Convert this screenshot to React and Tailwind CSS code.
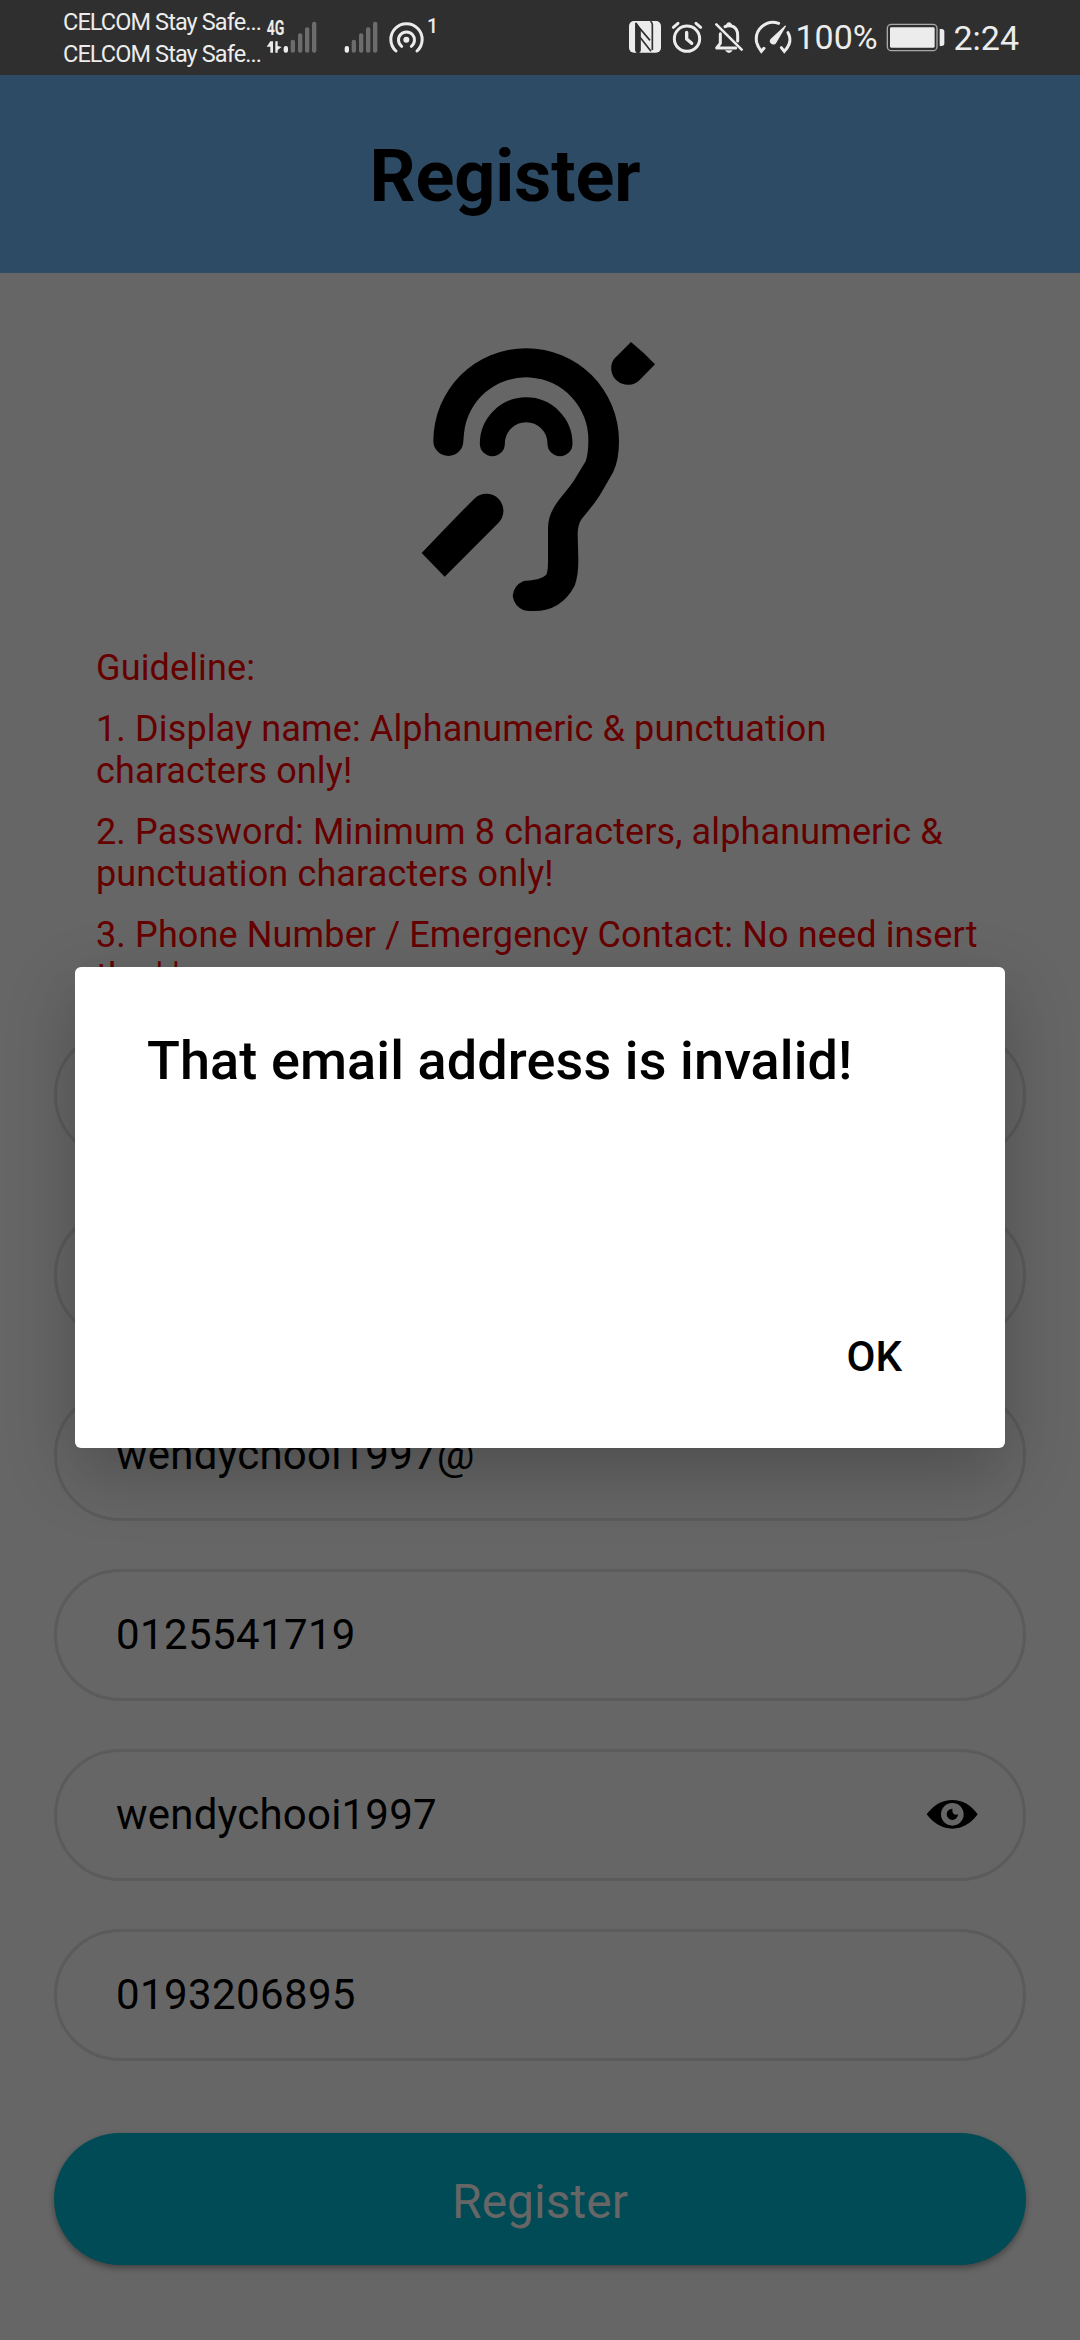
const guidelines = [
  "Guideline:",
  "1. Display name: Alphanumeric & punctuation characters only!",
  "2. Password: Minimum 8 characters, alphanumeric & punctuation characters only!",
  "3. Phone Number / Emergency Contact: No need insert the '-'",
];

function SignalIcons() {
  return (
    <svg className="h-[75px] w-[180px]" viewBox="678 0 540 225" fill="#ececec">
      <text x="680" y="106" fontFamily="Roboto" fontWeight="700" fontSize="58" textLength="53" lengthAdjust="spacingAndGlyphs">4G</text>
      <path d="M691 124h8v34h-8v-18h-11zM706 124h7v14l12 3-12 9v8h-7z" />
      <rect x="731" y="138" width="13" height="20" rx="6" />
      <g fill="#6c6c6c">
        <rect x="752" y="119" width="13" height="39" rx="6" />
        <rect x="774" y="100" width="13" height="58" rx="6" />
        <rect x="795" y="82" width="13" height="76" rx="6" />
        <rect x="816" y="65" width="13" height="93" rx="6" />
        <rect x="935" y="119" width="13" height="39" rx="6" />
        <rect x="957" y="100" width="13" height="58" rx="6" />
        <rect x="978" y="82" width="13" height="76" rx="6" />
        <rect x="999" y="65" width="13" height="93" rx="6" />
      </g>
      <rect x="914" y="138" width="13" height="20" rx="6" />
      <circle cx="1099" cy="119" r="9" />
      <g fill="none" stroke="#ececec" strokeWidth="9" strokeLinecap="round">
        <path d="M1068 153A47 47 0 1 1 1131 153" />
        <path d="M1085 139A24 24 0 1 1 1114 139" />
      </g>
      <text x="1161" y="99" fontFamily="Roboto" fontWeight="500" fontSize="59">1</text>
    </svg>
  );
}

function DeviceIcons() {
  return (
    <svg className="h-[75px] w-[164px]" viewBox="87 0 492 225" fill="#ececec">
      <rect x="87" y="63" width="96" height="95" rx="15" />
      <g fill="none" stroke="#2f2f2f" strokeWidth="5">
        <path d="M108 68V152Q110 156 114 158" />
        <path d="M108 70L120 86V152Q119 156 114 158" />
        <path d="M120 86L150 121" />
        <path d="M120 112L153 154" />
        <path d="M151 64Q157 67 157 74V150" />
      </g>
      <path d="M106 68L120 84V156H110L106 150z" fill="#2f2f2f" />
      <g fill="none" stroke="#ececec" strokeWidth="9" strokeLinecap="round" strokeLinejoin="round">
        <circle cx="261" cy="116" r="38" />
        <path d="M220 82L234 70M288 70L302 82" />
        <path d="M260 97V117L275 130" strokeWidth="10" />
        <path d="M349 73L425 149" strokeWidth="8" />
        <path d="M361 101V130L350 144H407" />
        <path d="M375 80Q387 74 400 80Q413 87 413 106V123" />
        <path d="M382 76Q387 67 392 76" />
      </g>
      <path d="M375 151H398Q394 159 387 159T375 151z" />
      <g fill="none" stroke="#ececec" strokeWidth="9" strokeLinecap="round">
        <path d="M536 70A50 50 0 0 0 470 127Q473 140 484 154L492 145" />
        <path d="M564 98Q574 115 567 133Q563 143 553 154L544 143" />
      </g>
      <path d="M556 76L558 79L529 128A10 10 0 1 1 511 118z" />
    </svg>
  );
}

function Battery() {
  return (
    <svg className="h-[75px] w-[59px]" viewBox="857 0 177 225">
      <rect x="861" y="73" width="149" height="79" rx="12" fill="none" stroke="#a8a8a8" strokeWidth="4" />
      <rect x="869" y="82" width="134" height="61" rx="4" fill="#ececec" />
      <path d="M1018 87h6q8 0 8 8v35q0 8-8 8h-6z" fill="#ececec" />
    </svg>
  );
}

function StatusBar() {
  return (
    <div className="flex h-[75px] items-center bg-[#2f2f2f] pl-[63px] pr-[61px] text-[#ececec]">
      <div className="w-[203px] shrink-0 whitespace-nowrap text-[23.5px] leading-8 tracking-[-0.9px]">
        <div>CELCOM Stay Safe...</div>
        <div>CELCOM Stay Safe...</div>
      </div>
      <SignalIcons />
      <div className="ml-auto flex items-center text-[34px] leading-[75px]">
        <DeviceIcons />
        <span className="ml-[2px] w-[91px]">100%</span>
        <Battery />
        <span className="ml-2 pt-px">2:24</span>
      </div>
    </div>
  );
}

function EarLogo() {
  return (
    <svg className="mx-auto block h-[280px] w-[240px]" viewBox="60 60 720 840">
      <path d="M100 363A278 278 0 0 1 657 363Q657 420 640 455L610 508Q598 530 583 550L545 597Q534 612 533 640L535 720Q535 768 524 797Q483 874 400 873Q379 873 370 870Q343 858 338 828Q341 796 371 783Q424 780 439 764Q444 752 444 725V622Q445 590 463 560Q470 547 494 518Q508 502 521 483L557 424Q565 400 565 363A187 187 0 0 0 192 340L190 363A45 45 0 0 1 100 363z" />
      <path d="M277 371A101 101 0 0 1 480 371" fill="none" stroke="#000" strokeWidth="75" strokeLinecap="round" />
      <path d="M65 699L134 770L295 609A50 50 0 0 0 223 536Q195 563 65 699z" />
      <path d="M693 66Q730 96 765 133L719 180A50 50 0 0 1 642 117z" />
    </svg>
  );
}

function EyeIcon() {
  return (
    <svg className="h-[30px] w-[52px]" viewBox="0 0 156 90">
      <path d="M2 46Q34 3 79 3T155 46Q123 89 79 89T2 46z" />
      <circle cx="79" cy="46" r="34" fill="#666" />
      <path d="M79 29A17 17 0 1 0 96 46Q89 49 83 45Q78 40 79 29z" />
    </svg>
  );
}

function Field({ value, numeric, children }) {
  return (
    <div className="flex h-[132px] items-center justify-between rounded-full border-3 border-[#5b5b5b] pb-[2px] pl-[59px] pr-[45px] text-[42px] text-black">
      <span className={numeric ? "tracking-[0.38px]" : "tracking-[0.2px]"}>{value}</span>
      {children}
    </div>
  );
}

export default function App() {
  return (
    <div className="relative h-[2340px] w-[1080px] overflow-hidden bg-[#666666] font-['Roboto',sans-serif]">
      <StatusBar />
      <header className="flex h-[198px] items-center justify-center bg-[#2e4b66] pr-[70px] pt-[6px]">
        <h1 className="text-[72px] font-bold leading-none tracking-[-0.1px]">Register</h1>
      </header>
      <main className="px-[54px] pt-[67px]">
        <EarLogo />
        <div className="ml-[42px] mr-[30px] mt-[27px] flex flex-col gap-[19px] text-[36px] leading-[42px] tracking-[0.13px] text-[#660000]">
          {guidelines.map((line) => (
            <p key={line}>{line}</p>
          ))}
        </div>
        <div className="mt-[31px] flex flex-col gap-12">
          <Field value="" />
          <Field value="" />
          <Field value="wendychooi1997@" />
          <Field value="0125541719" numeric />
          <Field value="wendychooi1997">
            <EyeIcon />
          </Field>
          <Field value="0193206895" numeric />
        </div>
        <button className="mt-[72px] flex h-[132px] w-full items-center justify-center rounded-full bg-[#004b55] pt-[5px] text-[48px] text-[#666666] shadow-[0_3px_6px_rgba(0,0,0,0.35)]">
          Register
        </button>
      </main>
      <div className="absolute inset-x-0 bottom-0 top-[75px] flex items-center justify-center">
        <div className="flex h-[481px] w-[930px] flex-col justify-between rounded-md bg-white pb-[61px] pl-[72px] pr-[103px] pt-[62px] text-black shadow-[0_24px_70px_rgba(0,0,0,0.24)]">
          <h2 className="text-[54px] font-medium leading-[64px] tracking-[0.1px]">That email address is invalid!</h2>
          <button className="self-end text-[42px] font-medium leading-[60px]">OK</button>
        </div>
      </div>
    </div>
  );
}
